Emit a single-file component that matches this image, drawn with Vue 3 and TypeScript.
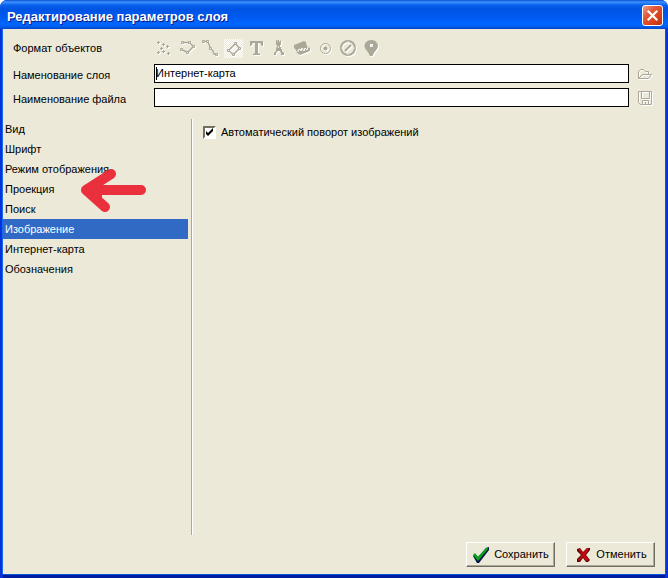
<script setup lang="ts">
import { ref } from 'vue'

const layerName = ref('Интернет-карта')
const fileName = ref('')
const autoRotate = ref(true)
const sections = [
  'Вид',
  'Шрифт',
  'Режим отображения',
  'Проекция',
  'Поиск',
  'Изображение',
  'Интернет-карта',
  'Обозначения',
]
const current = ref('Изображение')
const pinnedFormat = 'Полигоны'
</script>

<template>
  <main class="window">
    <header class="titlebar">
      <h1>Редактирование параметров слоя</h1>
      <button class="close" type="button" aria-label="Закрыть">
        <svg width="21" height="21" viewBox="0 0 21 21">
          <path d="M6.5 6.5 L14.5 14.5 M14.5 6.5 L6.5 14.5" stroke="#fff" stroke-width="2.2" stroke-linecap="square" />
        </svg>
      </button>
    </header>

    <form class="body" @submit.prevent>
      <div class="fields">
        <span class="label">Формат объектов</span>
        <div class="tools" role="toolbar" aria-label="Формат объектов">
          <button type="button" disabled aria-label="Точки">
            <svg viewBox="0 0 19 19">
              <path class="fill" d="M3 2h1v1h1v1h-1v1h-1v-1h-1v-1h1zM8 4h1v1h1v1h-1v1h-1v-1h-1v-1h1zM12 6h1v1h1v1h-1v1h-1v-1h-1v-1h1zM6 8h1v1h1v1h-1v1h-1v-1h-1v-1h1zM3 12h1v1h1v1h-1v1h-1v-1h-1v-1h1zM8 11h1v1h1v1h-1v1h-1v-1h-1v-1h1zM13 13h1v1h1v1h-1v1h-1v-1h-1v-1h1z" />
            </svg>
          </button>
          <button type="button" disabled aria-label="Линии">
            <svg viewBox="0 0 19 19">
              <path class="line bold" d="M4.5 3.5 H11.5 L15.5 7.5 L9.5 13.5 L3.5 10.5" />
              <path class="node" d="M3.5 2.5h2v2h-2zM10.5 2.5h2v2h-2zM14.5 6.5h2v2h-2zM8.5 12.5h2v2h-2zM2.5 9.5h2v2h-2z" />
            </svg>
          </button>
          <button type="button" disabled aria-label="Сплайны">
            <svg viewBox="0 0 19 19">
              <path class="line bold" d="M2.5 2.5 H6.5 L8 5 L9.5 9.5 L12 12 L13 15 H15.5" />
              <path class="node" d="M1.5 1.5h2v2h-2zM5.5 1.5h2v2h-2zM8.5 8.5h2v2h-2zM14.5 14.5h2v2h-2z" />
            </svg>
          </button>
          <button type="button" disabled :class="{ pinned: pinnedFormat }" :aria-label="pinnedFormat">
            <svg viewBox="0 0 19 19">
              <path class="line bold" d="M11.5 4.5 L15.5 9.5 L9.5 15.5 L4.5 11.5 Z" />
              <path class="node" d="M10.5 3.5h2v2h-2zM14.5 8.5h2v2h-2zM8.5 14.5h2v2h-2zM3.5 10.5h2v2h-2z" />
            </svg>
          </button>
          <button type="button" disabled aria-label="Подписи">
            <svg viewBox="0 0 19 19">
              <path class="fill" d="M3 2H16V7H15L13 4H11V14L13 15V16H6V15L8 14V4H6L4 7H3Z" />
            </svg>
          </button>
          <button type="button" disabled aria-label="Знаки">
            <svg viewBox="0 0 19 19">
              <path class="fill" d="M6 1H7L8 3V1H9V3L11 1V6H10V8H11V10H12V12L14 14V16H11V14L10 12H8L6 14V16H4V14L6 12V10L7 7V6H6Z" />
              <path class="dots" d="M8 7h1v2h-1z" />
            </svg>
          </button>
          <button type="button" disabled aria-label="Растр">
            <svg viewBox="0 0 19 19">
              <path class="fill" d="M1 6 L11 2 L13 3 L14 7 L17 9 V12 L7 16 L4 14 L3 11 L1 9Z" />
              <path class="cut" d="M5 13 V11 L7 10 L8 12 L9 9 L11 12 L12 9 L14 11 L15 8" />
            </svg>
          </button>
          <button type="button" disabled aria-label="Окружность">
            <svg viewBox="0 0 19 19">
              <circle class="line" cx="9.5" cy="9.5" r="5" />
              <circle class="fill" cx="9.5" cy="9.5" r="2" />
            </svg>
          </button>
          <button type="button" disabled aria-label="Компас">
            <svg viewBox="0 0 19 19">
              <circle class="line thick" cx="9" cy="9" r="7" />
              <path class="line thick" d="M6 12 L12 6" />
              <path class="dots" d="M8.5 2h1v2h-1zM8.5 14h1v2h-1zM2 8.5h2v1h-2zM14 8.5h2v1h-2z" />
            </svg>
          </button>
          <button type="button" disabled aria-label="Метка">
            <svg viewBox="0 0 19 19">
              <path class="fill" fill-rule="evenodd" d="M9.5 1 C5 1 2.500 4 2.500 7 C2.500 10 6 12 8 17 H10.500 C12.500 12 16 10 16 7 C16 4 13.500 1 9.500 1Z M8 5H11V8H8Z" />
            </svg>
          </button>
        </div>
        <span></span>

        <label class="label" for="layer-name">Наменование слоя</label>
        <div class="entry">
          <input id="layer-name" v-model="layerName" type="text" class="active" />
        </div>
        <button type="button" class="side" disabled aria-label="Открыть">
          <svg viewBox="0 0 16 16">
            <path class="line" d="M1.5 12.500 V5.500 L3.500 3.500 H6.500 L8.500 5.500 H11.500 V8.500 M1.500 12.500 L5.500 8.500 H14.500 L11.500 12.500 Z" />
          </svg>
        </button>

        <label class="label" for="file-name">Наименование файла</label>
        <div class="entry"><input id="file-name" v-model="fileName" type="text" /></div>
        <button type="button" class="side" disabled aria-label="Сохранить файл">
          <svg viewBox="0 0 16 16">
            <path class="line" d="M1.5 1.5 H14.5 V14.5 H3.5 L1.5 12.5 Z M4.5 1.5 V8.5 H12.5 V1.5 M5.5 14.5 V10.5 H11.5 V14.5 M8.5 12 V14" />
          </svg>
        </button>
      </div>

      <div class="content">
        <nav class="sections" aria-label="Разделы">
          <button
            v-for="section in sections"
            :key="section"
            type="button"
            :class="{ selected: section === current }"
            @click="current = section"
          >
            {{ section }}
          </button>
          <svg class="arrow" viewBox="0 0 68 46" aria-hidden="true">
            <path d="M7 22 L32 6 M7 22 L26 39 M9 22 H62" />
            <path d="M4 22 L22 12 V32 Z" />
          </svg>
        </nav>
        <section class="page">
          <label class="check">
            <input v-model="autoRotate" type="checkbox" />
            <svg width="9" height="9" viewBox="0 0 9 9" aria-hidden="true">
              <path d="M1 3 L3 5 L8 0 V3 L3 8 L1 6Z" />
            </svg>
            <span>Автоматический поворот изображений</span>
          </label>
        </section>
      </div>

      <footer class="actions">
        <button type="submit">
          <svg width="18" height="18" viewBox="0 0 18 18" aria-hidden="true">
            <path d="M1 10 L3 8 L6 11 L14 2 L17 1 V4 L7 17 H5Z" fill="#00134a" />
            <path d="M1 9 L3 7 L6 11 L14 2 L16 1 V3 L6 15Z" fill="#0ba51a" />
          </svg>
          <span>Сохранить</span>
        </button>
        <button type="button">
          <svg width="18" height="18" viewBox="0 0 18 18" aria-hidden="true">
            <path d="M3 3 L6 2 L9 6 L13 2 H16 V4 L12 9 L16 14 L14 16 H12 L9 12 L6 16 H3 V13 L7 9 L3 5Z" fill="#5c0505" />
            <path d="M4 3 H6 L9 7 L13 2 L15 3 L11 9 L15 14 L12 15 L9 11 L5 15 L4 14 L8 9Z" fill="#c80a10" />
          </svg>
          <span>Отменить</span>
        </button>
      </footer>
    </form>
  </main>
</template>

<style>
body {
  background: #fff;
}
</style>

<style scoped>
.window {
  box-sizing: border-box;
  min-height: 100vh;
  display: flex;
  flex-direction: column;
  overflow: hidden;
  border-radius: 7px 7px 0 0;
  background: #0831d9;
  font: 11px/13px "Liberation Sans", Arial, sans-serif;
  color: #000;
}

button {
  padding: 0;
  border: 0;
  background: none;
  font: inherit;
  color: inherit;
}

.titlebar {
  display: flex;
  align-items: center;
  justify-content: space-between;
  height: 29px;
  padding: 0 5px 0 7px;
  background: linear-gradient(#0a4fd0 0, #3b93ff 2px, #0a62ee 5px, #0054e3 9px, #0058ee 16px, #0066ff 24px, #0062f5 26px, #0044c8 29px);
}

.titlebar h1 {
  margin: 0;
  padding-top: 4px;
  font: bold 13px/18px "Liberation Sans", Arial, sans-serif;
  color: #fff;
  text-shadow: 1px 1px #0a1883;
}

.close {
  display: flex;
  align-items: center;
  justify-content: center;
  box-sizing: border-box;
  width: 21px;
  height: 21px;
  margin-top: 2px;
  border: 1px solid #fff;
  border-radius: 3px;
  background: linear-gradient(135deg, #f0a088 0, #e2583a 35%, #d8401a 70%, #b83010 100%);
}

.close svg {
  flex: none;
}

.body {
  flex: 1;
  display: flex;
  flex-direction: column;
  margin: 0 3px 4px;
  background: #ece9d8;
  box-shadow: -1px 0 #166aee, 0 1px #0855dd, 1px 0 #0855dd, 0 4px #001da0;
}

.fields {
  display: grid;
  grid-template-columns: 133px minmax(0, 1fr) 16px;
  grid-template-rows: 22px 19px 19px;
  row-gap: 5px;
  column-gap: 8px;
  align-items: center;
  padding: 8px 12px 12px 10px;
}

.label {
  white-space: nowrap;
}

label.label {
  padding-top: 4px;
}

.tools {
  display: flex;
  gap: 4px;
  padding-left: 1px;
}

.tools button {
  width: 19px;
  height: 19px;
}

.tools svg,
.side svg {
  display: block;
  filter: drop-shadow(1px 1px 0 #fff);
}

.fill {
  fill: #aca899;
}

.line {
  fill: none;
  stroke: #aca899;
  stroke-width: 1;
}

.bold {
  stroke-width: 1.5;
}

.thick {
  stroke-width: 2;
}

.node {
  fill: #ece9d8;
  stroke: #aca899;
  stroke-width: 1;
}

.dots {
  fill: #ece9d8;
}

.cut {
  fill: none;
  stroke: #fff;
}

.pinned {
  background: repeating-conic-gradient(#fff 0 25%, #ece9d8 0 50%) 0 0 / 2px 2px;
}

.entry {
  display: flex;
}

.entry input {
  flex: 1;
  min-width: 0;
  box-sizing: border-box;
  height: 19px;
  padding: 0 1px 1px;
  border: 1px solid #000;
  border-radius: 0;
  outline: 0;
  background: #fff;
  font: inherit;
  color: #000;
}

.entry .active {
  background: linear-gradient(#000, #000) 1px 2px / 1px 13px no-repeat #fff;
}

.side {
  width: 16px;
  height: 16px;
}

.content {
  flex: 1;
  display: grid;
  grid-template-columns: 185px minmax(0, 1fr);
  column-gap: 3px;
}

.sections {
  position: relative;
  display: flex;
  flex-direction: column;
}

.sections button {
  height: 20px;
  padding-left: 2px;
  text-align: left;
}

.sections .selected {
  background: #316ac5;
  color: #fff;
}

.arrow {
  position: absolute;
  left: 76px;
  top: 49px;
  width: 68px;
  height: 46px;
  opacity: 0.95;
}

.arrow path {
  fill: #ea2734;
  stroke: #ea2734;
  stroke-width: 10;
  stroke-linecap: round;
  stroke-linejoin: round;
}

.arrow path + path {
  stroke-width: 2;
}

.page {
  border-left: 1px solid #aca899;
  box-shadow: inset 1px 0 #fff;
  padding: 7px 11px;
}

.check {
  display: inline-grid;
  grid-template-columns: 13px auto;
  column-gap: 5px;
  align-items: center;
}

.check input {
  grid-area: 1 / 1;
  appearance: none;
  box-sizing: border-box;
  width: 13px;
  height: 13px;
  margin: 0;
  border: 2px solid;
  border-color: #716f64 #fff #fff #716f64;
  background: #fff;
}

.check svg {
  grid-area: 1 / 1;
  justify-self: center;
  pointer-events: none;
  visibility: hidden;
}

.check input:checked + svg {
  visibility: visible;
}

.actions {
  display: flex;
  justify-content: flex-end;
  gap: 11px;
  padding: 7px 10px;
}

.actions button {
  display: flex;
  align-items: center;
  justify-content: center;
  gap: 4px;
  box-sizing: border-box;
  width: 89px;
  height: 25px;
  border: 1px solid;
  border-color: #fff #716f64 #716f64 #fff;
  box-shadow: inset -1px -1px #aca899;
}
</style>
